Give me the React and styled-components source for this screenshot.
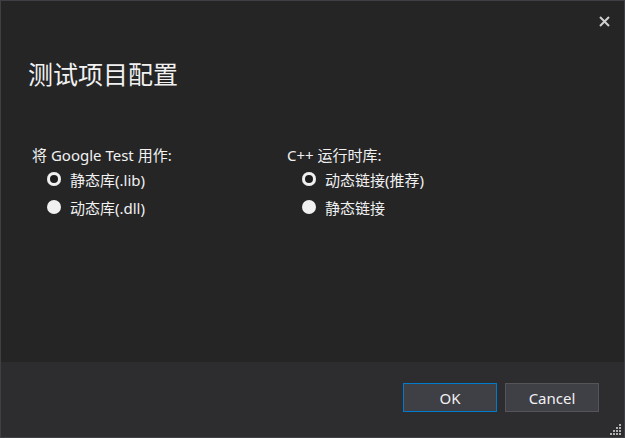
import styled, { createGlobalStyle } from "styled-components"

const GlobalStyle = createGlobalStyle`
  html, body { margin: 0; padding: 0; background: #252526; }
  body {
    font-family: "Noto Sans", "Noto Sans CJK SC", sans-serif;
    color: #f1f1f1;
  }
`;

const titleText = '\u6d4b\u8bd5\u9879\u76ee\u914d\u7f6e';

const groups = [
  {
    label: '\u5c06 Google Test \u7528\u4f5c:',
    options: ['\u9759\u6001\u5e93(.lib)', '\u52a8\u6001\u5e93(.dll)'],
  },
  {
    label: 'C++ \u8fd0\u884c\u65f6\u5e93:',
    options: ['\u52a8\u6001\u94fe\u63a5(\u63a8\u8350)', '\u9759\u6001\u94fe\u63a5'],
  },
];

const Dialog = styled.div`
  width: 625px;
  height: 438px;
  box-sizing: border-box;
  border: 1px solid #3f3f46;
  background: #252526;
  display: flex;
  flex-direction: column;
  position: relative;
`;

const Body = styled.div`
  flex: 1;
  padding: 0 31px;
  display: flex;
  flex-direction: column;
`;

const TitleBar = styled.div`
  height: 40px;
  display: flex;
  justify-content: flex-end;
  align-items: center;
`;

const CloseButton = styled.button`
  background: none;
  border: none;
  padding: 0;
  margin-right: -23px;
  width: 24px;
  height: 24px;
  display: flex;
  align-items: center;
  justify-content: center;
  cursor: pointer;
`;

const Title = styled.h1`
  margin: 18px 0 0 -4px;
  font-size: 25px;
  font-weight: normal;
  line-height: 1.2;
  color: #f1f1f1;
`;

const Columns = styled.div`
  display: grid;
  grid-template-columns: 255px 1fr;
  margin-top: 55px;
`;

const Group = styled.div`
  display: flex;
  flex-direction: column;
`;

const GroupLabel = styled.div`
  font-size: 15px;
  line-height: 20px;
  padding-top: 1px;
`;

const Option = styled.label`
  display: flex;
  align-items: center;
  gap: 9px;
  margin-left: 15px;
  height: 28px;
  font-size: 15px;
`;

const Radio = styled.span`
  width: 14px;
  height: 14px;
  border-radius: 50%;
  background: #f1f1f1;
  box-sizing: border-box;
  box-shadow: ${p => (p.checked ? 'inset 0 0 0 3px #f1f1f1, inset 0 0 0 7px #1e1e1e' : 'none')};
`;

const Footer = styled.div`
  height: 75px;
  background: #2d2d30;
  display: flex;
  justify-content: flex-end;
  align-items: center;
  gap: 8px;
  padding: 0 25px 4px 0;
  box-sizing: border-box;
`;

const Button = styled.button`
  width: 94px;
  height: 29px;
  background: #3f3f46;
  color: #f1f1f1;
  border: 1px solid ${p => (p.primary ? '#007acc' : '#555559')};
  font-family: inherit;
  font-size: 15px;
  padding: 0;
`;

const Grip = styled.svg`
  position: absolute;
  right: 2px;
  bottom: 2px;
`;

const gripDots = [[10, 2], [10, 5], [7, 5], [10, 8], [7, 8], [4, 8], [10, 11], [7, 11], [4, 11], [1, 11]];

const App = () => {
  return (
    <>
      <GlobalStyle />
      <Dialog>
        <Body>
          <TitleBar>
            <CloseButton aria-label="close">
              <svg width="11" height="11" viewBox="0 0 11 11">
                <path d="M1 1L10 10M10 1L1 10" stroke="#d0d0d0" strokeWidth="2" />
              </svg>
            </CloseButton>
          </TitleBar>
          <Title>{titleText}</Title>
          <Columns>
            {groups.map((g) => (
              <Group key={g.label}>
                <GroupLabel>{g.label}</GroupLabel>
                {g.options.map((o, i) => (
                  <Option key={o}>
                    <Radio checked={i === 0} />
                    {o}
                  </Option>
                ))}
              </Group>
            ))}
          </Columns>
        </Body>
        <Footer>
          <Button primary>OK</Button>
          <Button>Cancel</Button>
        </Footer>
        <Grip width="12" height="12" viewBox="0 0 12 12">
          {gripDots.map(([x, y]) => (
            <rect key={x + '-' + y} x={x - 1} y={y - 1} width="2" height="2" fill="#b0b0b0" />
          ))}
        </Grip>
      </Dialog>
    </>
  )
}

export default App
